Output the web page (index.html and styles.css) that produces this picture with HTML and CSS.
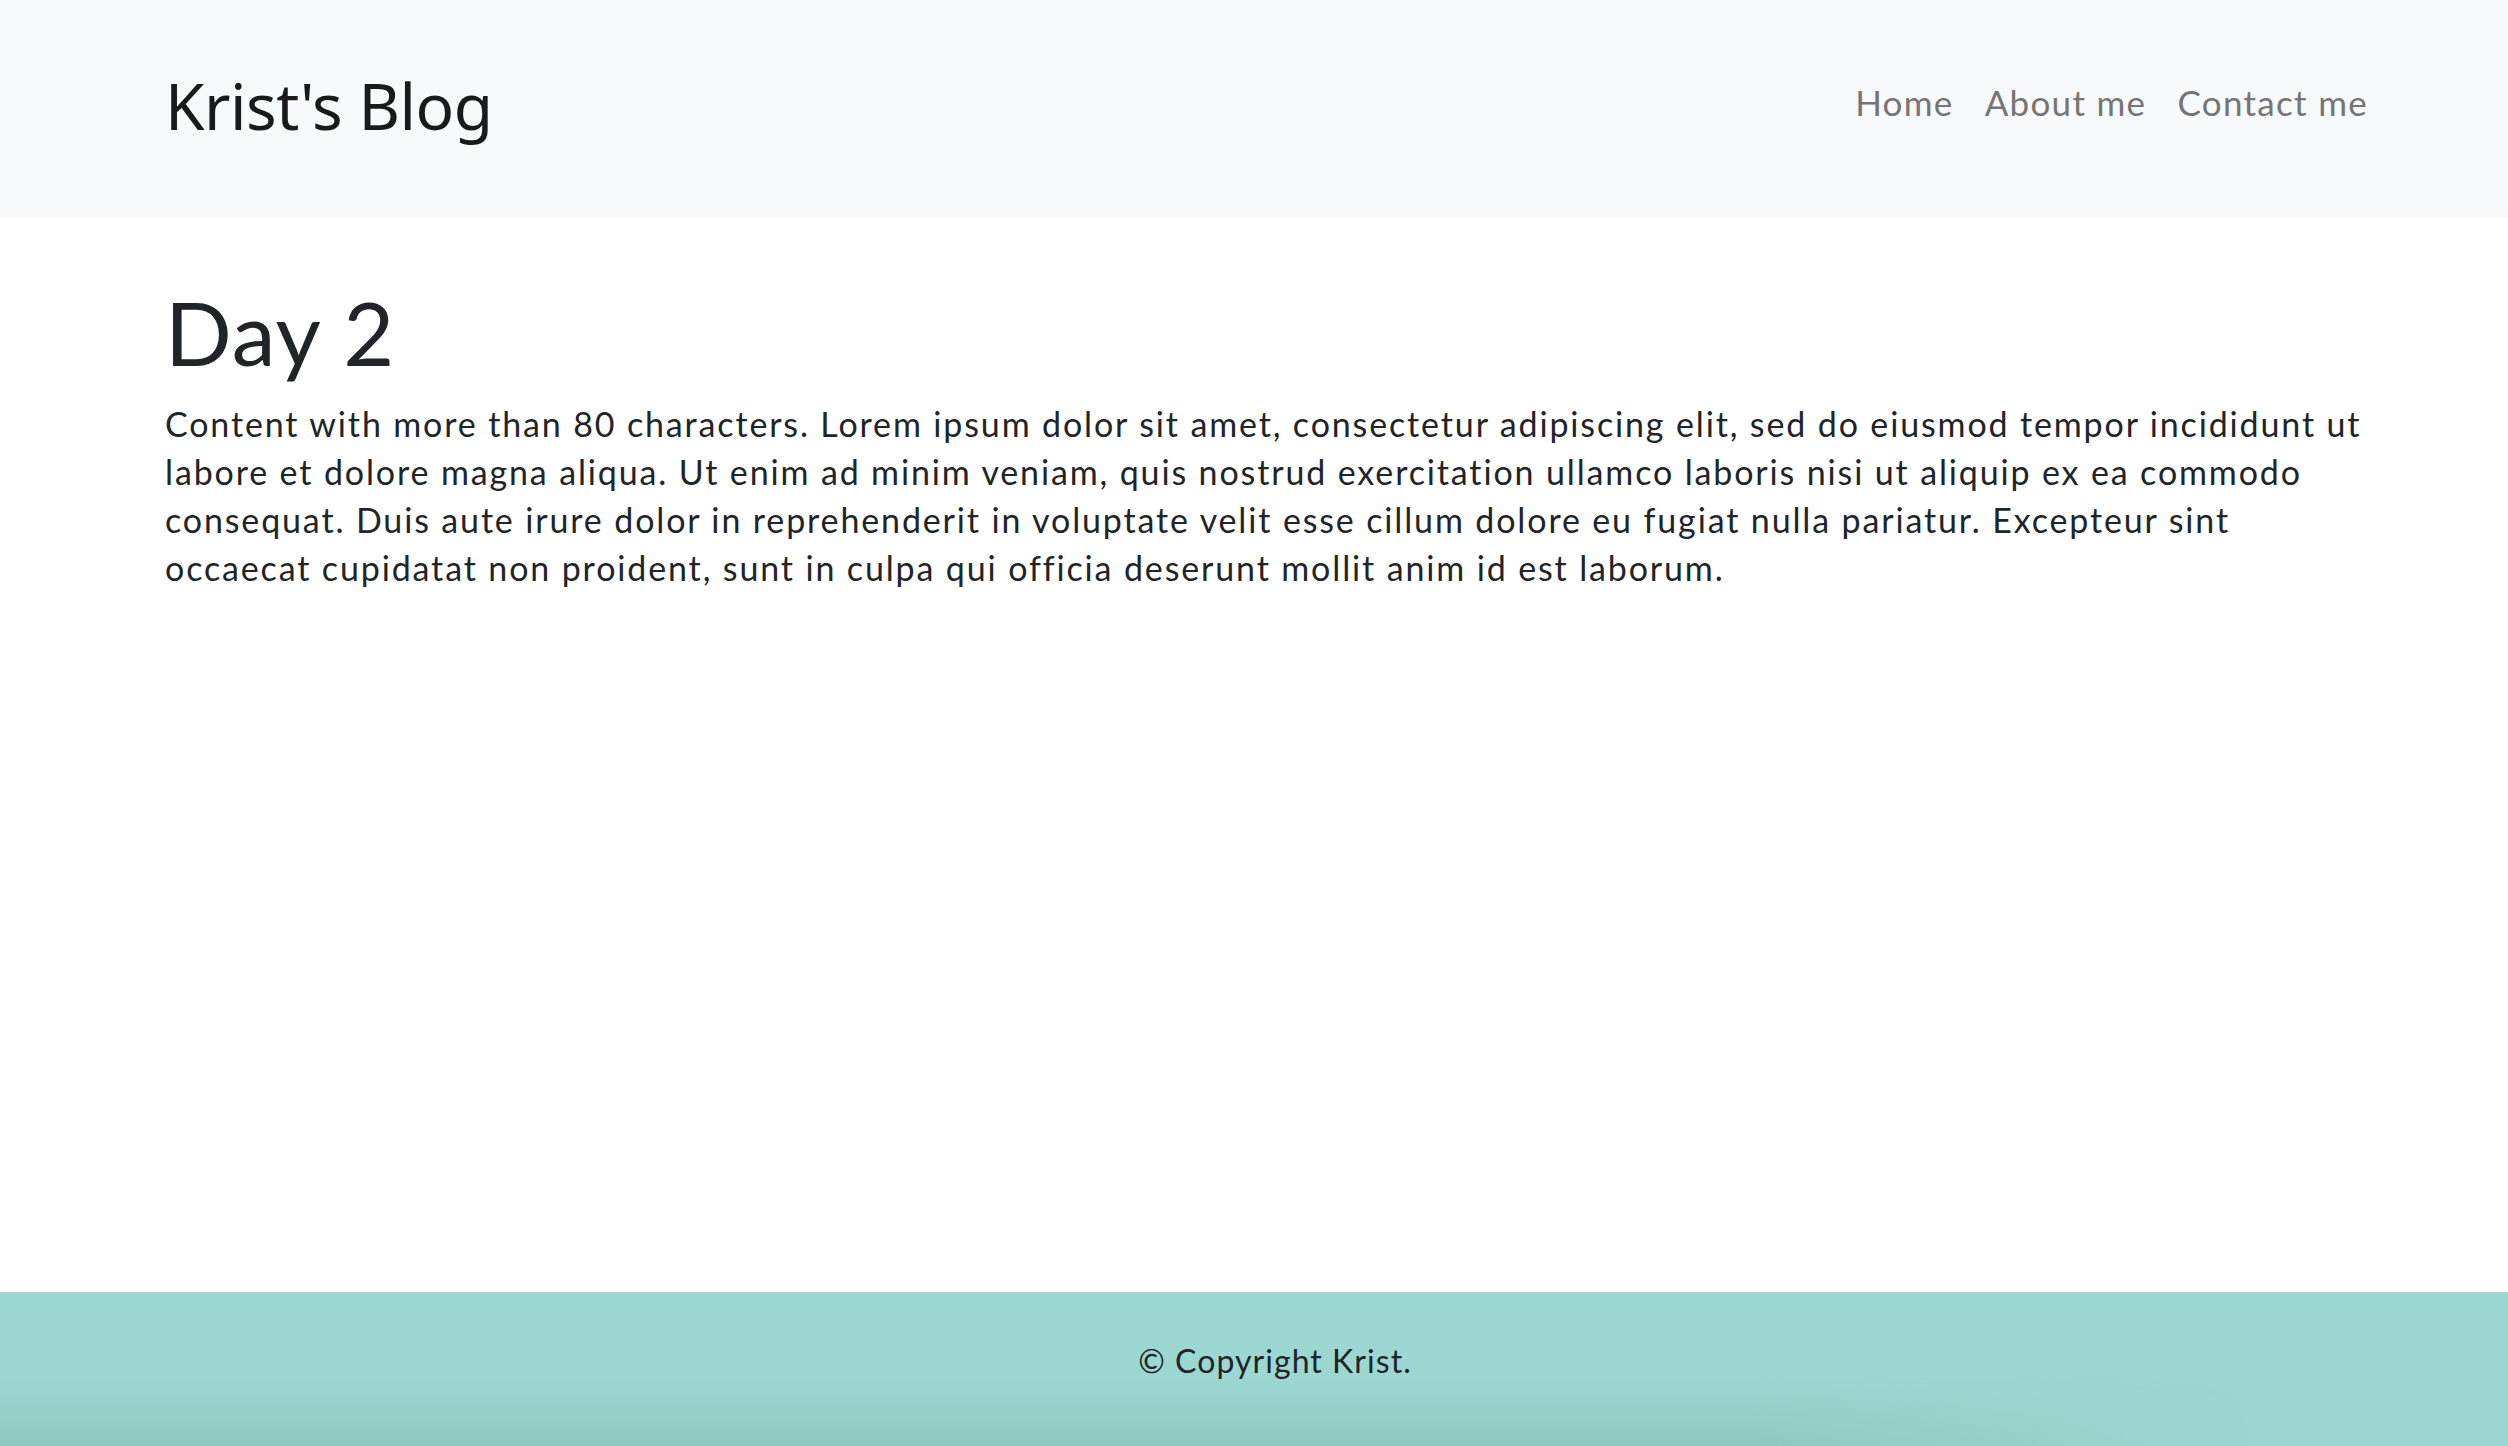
FILE: index.html
```html
<!DOCTYPE html>
<html lang="en">
<head>
<meta charset="utf-8">
<title>Krist's Blog</title>
<link rel="stylesheet" href="styles.css">
</head>
<body>
<header class="site-header">
  <div class="header-inner">
    <a class="brand" href="#">Krist's Blog</a>
    <nav class="nav">
      <a class="nav-link" href="#">Home</a>
      <a class="nav-link" href="#">About me</a>
      <a class="nav-link" href="#">Contact me</a>
    </nav>
  </div>
</header>
<main class="content">
  <h1 class="post-title">Day 2</h1>
  <p class="post-body"><span class="line">Content with more than 80 characters. Lorem ipsum dolor sit amet, consectetur adipiscing elit, sed do eiusmod tempor incididunt ut</span> <span class="line">labore et dolore magna aliqua. Ut enim ad minim veniam, quis nostrud exercitation ullamco laboris nisi ut aliquip ex ea commodo</span> <span class="line">consequat. Duis aute irure dolor in reprehenderit in voluptate velit esse cillum dolore eu fugiat nulla pariatur. Excepteur sint</span> <span class="line">occaecat cupidatat non proident, sunt in culpa qui officia deserunt mollit anim id est laborum.</span></p>
</main>
<footer class="site-footer">
  <p class="copyright">© Copyright Krist.</p>
</footer>
</body>
</html>
```

FILE: styles.css
```css
html, body {
  margin: 0;
  padding: 0;
}

body {
  min-height: 100vh;
  display: flex;
  flex-direction: column;
  background: #ffffff;
  color: #212529;
  font-family: "Lato", "Noto Sans", sans-serif;
  overflow: hidden;
}

a {
  text-decoration: none;
}

.site-header {
  background: #f8f9fa;
  height: 218px;
  box-sizing: border-box;
}

.header-inner {
  height: 100%;
  display: flex;
  align-items: center;
  justify-content: space-between;
  padding: 0 140px 0 165px;
}

.brand {
  font-family: "Noto Sans", "Lato", sans-serif;
  font-size: 64px;
  color: #1a1a1a;
  letter-spacing: -0.5px;
  margin-top: -8px;
}

.nav {
  display: flex;
  gap: 31px;
  margin-top: -14px;
}

.nav-link {
  font-size: 35px;
  color: #757575;
  letter-spacing: 1.3px;
}

.content {
  flex: 1;
  padding: 0 123px 0 165px;
}

.post-title {
  margin: 66px 0 0 0;
  font-weight: 400;
  font-size: 88px;
  line-height: 1.1;
  color: #212529;
  letter-spacing: 1px;
}

.post-body {
  margin: 19px 0 0 0;
  font-size: 34px;
  line-height: 48px;
  letter-spacing: 1.86px;
}

.line {
  display: block;
  white-space: nowrap;
}

.site-footer {
  position: relative;
  height: 154px;
  background: #9cd8d1;
  display: flex;
  justify-content: center;
  padding-left: 42px;
  box-sizing: border-box;
}

.site-footer::after {
  content: "";
  position: absolute;
  left: 0;
  right: 0;
  bottom: 0;
  height: 70px;
  background: linear-gradient(to bottom, rgba(144, 203, 196, 0), rgba(142, 200, 193, 1));
  -webkit-mask-image: linear-gradient(to right, #000 0%, #000 70%, transparent 90%);
  mask-image: linear-gradient(to right, #000 0%, #000 70%, transparent 90%);
  pointer-events: none;
}

.copyright {
  position: relative;
  z-index: 1;
  margin: 45px 0 0 0;
  font-size: 32px;
  line-height: 48px;
  color: #212529;
  letter-spacing: 1.05px;
}
```
